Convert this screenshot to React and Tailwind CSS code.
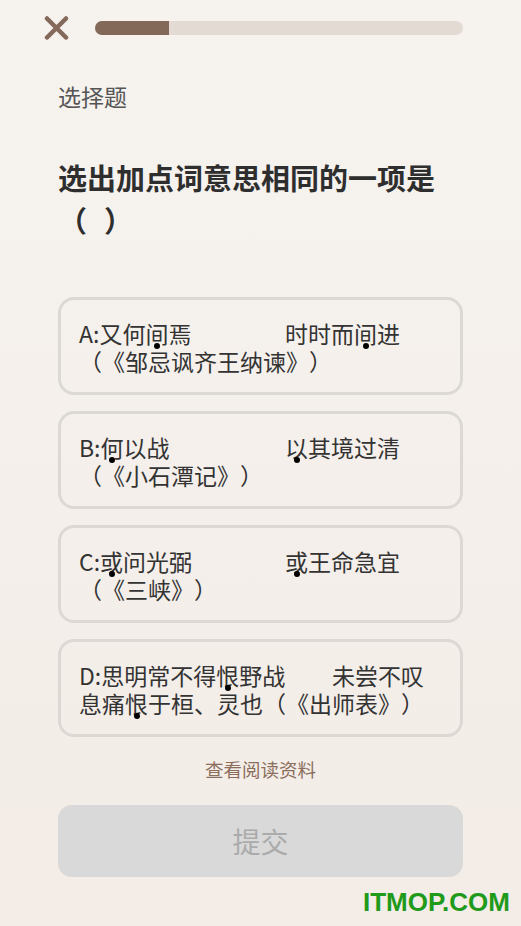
import React from 'react';

const Dot = ({ children }) => (
  <span className="relative">
    {children}
    <span className="absolute left-1/2 -translate-x-1/2 bottom-[1px] w-[6px] h-[6px] rounded-full bg-black" />
  </span>
);

const options = [
  {
    key: 'A',
    split: 206,
    left: <>A:又何<Dot>间</Dot>焉</>,
    right: <>时时而<Dot>间</Dot>进</>,
    second: <>（《邹忌讽齐王纳谏》）</>
  },
  {
    key: 'B',
    split: 206,
    left: <>B:<Dot>何</Dot>以战</>,
    right: <><Dot>以</Dot>其境过清</>,
    second: <>（《小石潭记》）</>
  },
  {
    key: 'C',
    split: 206,
    left: <>C:<Dot>或</Dot>问光弼</>,
    right: <><Dot>或</Dot>王命急宜</>,
    second: <>（《三峡》）</>
  },
  {
    key: 'D',
    split: 253,
    left: <>D:思明常不得<Dot>恨</Dot>野战</>,
    right: <>未尝不叹</>,
    second: <>息痛<Dot>恨</Dot>于桓、灵也（《出师表》）</>
  }
];

const App = () => {
  return (
    <div className="relative w-[521px] h-[926px] overflow-hidden bg-gradient-to-b from-[#f6f3ef] to-[#f3ece7] font-['Noto_Sans_CJK_SC',sans-serif] [text-spacing-trim:space-all]">
      {/* Header */}
      <div className="flex items-center h-[56px] pl-[44px] pr-[58px]">
        <svg width="25" height="24" viewBox="0 0 25 24" className="shrink-0">
          <path d="M3 2.5 L22 21.5 M22 2.5 L3 21.5" stroke="#85695a" strokeWidth="4.5" strokeLinecap="round" fill="none" />
        </svg>
        <div className="ml-[26px] flex-1 h-[14px] rounded-full bg-[#e2dad3] overflow-hidden">
          <div className="h-full w-[74px] bg-[#836a58]" />
        </div>
      </div>

      <div className="px-[58px]">
        <p className="mt-[25px] text-[23px] leading-[30px] text-[#555]">选择题</p>

        <h1 className="mt-[45px] text-[29px] leading-[42px] font-bold text-[#2e2e2e]">
          选出加点词意思相同的一项是
          <br />
          （<span className="inline-block w-[17px]" />）
        </h1>

        {/* Options */}
        <div className="mt-[57px] flex flex-col gap-[16px]">
          {options.map((o) => (
            <div
              key={o.key}
              className="h-[98px] rounded-[16px] border-[3px] border-[#dcd8d4] pt-[19px] px-[18px] text-[23px] leading-[28px] text-[#333] whitespace-nowrap"
            >
              <div>
                <span className="inline-block" style={{ width: o.split }}>{o.left}</span>
                <span>{o.right}</span>
              </div>
              <div>{o.second}</div>
            </div>
          ))}
        </div>

        <p className="mt-[20px] text-center text-[18.5px] leading-[24px] text-[#8b6d5c]">查看阅读资料</p>

        <button className="mt-[24px] w-full h-[72px] rounded-[14px] bg-[#d9d9d9] text-[28px] text-[#ababab]">
          提交
        </button>
      </div>

      {/* watermark */}
      <span className="absolute left-[363px] top-[889px] text-[26px] leading-none font-bold text-[#1f9a1a] font-['Liberation_Sans',sans-serif]">
        ITMOP.COM
      </span>
    </div>
  );
};

export default App;
